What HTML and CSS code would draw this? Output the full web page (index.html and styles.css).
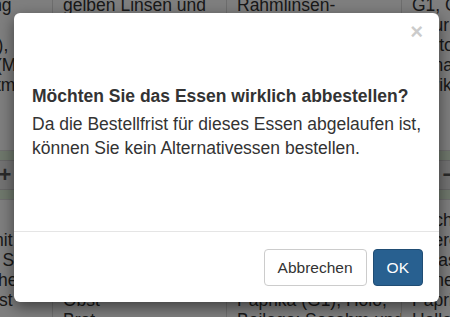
FILE: index.html
```html
<!DOCTYPE html>
<html lang="de">
<head>
<meta charset="utf-8">
<title>Abbestellen</title>
<link rel="stylesheet" href="styles.css">
</head>
<body>
<div class="page">
  <div class="table">
    <div class="cell">Salatergänzung<br>Salat<br>Kartoffeln (G1),<br>Kräuterbutter (Milch)<br>Gemüse-Salatmix</div>
    <div class="cell">gelben Linsen und<br>Kokosmilch<br>Reis (G1)<br>Salat<br>Dessert</div>
    <div class="cell">Rahmlinsen-<br>gemüse<br>Spätzle (G1)<br>Salat<br>Obst</div>
    <div class="cell">G1, G5<br>Sour Sahne<br>Kartoffel<br>Panade<br>Aprikosen</div>

    <div class="cell action"><span class="btn-sm">−</span><span class="field"></span><span class="btn-sm">+</span></div>
    <div class="cell action"><span class="btn-sm">−</span><span class="field"></span><span class="btn-sm">+</span></div>
    <div class="cell action"><span class="btn-sm">−</span><span class="field"></span><span class="btn-sm">+</span></div>
    <div class="cell action"><span class="btn-sm">−</span><span class="field"></span><span class="btn-sm">+</span></div>

    <div class="cell bottom"><div>Putenbraten mit<br>Kartoffeln und Salat<br>Vollkorn-Spaghetti<br>Gemüserohkost</div></div>
    <div class="cell bottom"><div>Gemüse<br>Kartoffeln<br>Salat<br>Dessert<br>Obst<br>Brot</div></div>
    <div class="cell bottom"><div>Gemüse<br>Kartoffeln<br>Salat<br>Dessert<br>Paprika (G1), Holo,<br>Beilage: Sesahm und</div></div>
    <div class="cell bottom"><div>Milchreis<br>Beeren<br>Chiasamen<br>Honey-Senf<br>Paprika<br>Hollandaise</div></div>
  </div>

  <div class="backdrop"></div>

  <div class="modal">
    <div class="modal-header">
      <span class="close">×</span>
    </div>
    <div class="modal-body">
      <p class="title">Möchten Sie das Essen wirklich abbestellen?</p>
      <p class="text">Da die Bestellfrist für dieses Essen abgelaufen ist, können Sie kein Alternativessen bestellen.</p>
    </div>
    <div class="modal-footer">
      <button class="btn btn-default">Abbrechen</button>
      <button class="btn btn-primary">OK</button>
    </div>
  </div>
</div>
</body>
</html>
```

FILE: styles.css
```css
html, body {
  margin: 0;
  padding: 0;
}

body {
  font-family: "Liberation Sans", Arial, sans-serif;
  color: #333;
  background: #fff;
  overflow: hidden;
}

.page {
  position: relative;
  width: 450px;
  height: 317px;
  overflow: hidden;
}

.table {
  display: grid;
  grid-template-columns: 174px 174px 175px 175px;
  grid-template-rows: 164px 49px 140px;
  margin-left: -121px;
  margin-top: -13px;
  font-size: 17.5px;
  line-height: 20px;
}

.cell {
  border-right: 1px solid #ddd;
  border-bottom: 1px solid #ddd;
  padding: 8px 10px;
  overflow: hidden;
  white-space: nowrap;
}

.bottom {
  display: flex;
  align-items: center;
  padding: 0 10px;
}

.action {
  background: #dff0d8;
  display: flex;
  align-items: center;
  padding: 0 30px;
}

.btn-sm {
  width: 34px;
  height: 30px;
  display: flex;
  align-items: center;
  justify-content: center;
  background: #e6e6e6;
  border: 1px solid #ccc;
  color: #555;
  font-size: 22px;
  font-weight: bold;
  box-sizing: border-box;
}

.field {
  flex: 1;
  height: 30px;
  background: #f4f4f4;
  border-top: 1px solid #ccc;
  border-bottom: 1px solid #ccc;
  box-sizing: border-box;
}

.backdrop {
  position: absolute;
  inset: 0;
  background: rgba(0, 0, 0, 0.5);
}

.modal {
  position: absolute;
  left: 14px;
  top: 13px;
  width: 425px;
  height: 289px;
  background: #fff;
  border-radius: 6px;
  box-shadow: 0 5px 15px rgba(0, 0, 0, 0.5);
  display: flex;
  flex-direction: column;
  font-size: 17.5px;
  color: #333;
}

.modal-header {
  display: flex;
  justify-content: flex-end;
  padding: 8px 16px 0;
  height: 48px;
  box-sizing: border-box;
}

.close {
  font-size: 22px;
  font-weight: bold;
  color: #000;
  opacity: 0.2;
  line-height: 22px;
}

.modal-body {
  flex: 1;
  padding: 23px 4px 0 18px;
}

.modal-body p {
  margin: 0;
}

.title {
  font-weight: bold;
  line-height: 24px;
  color: #333;
  margin-bottom: 4px !important;
}

.text {
  line-height: 24px;
}

.modal-footer {
  border-top: 1px solid #e5e5e5;
  display: flex;
  justify-content: flex-end;
  gap: 6px;
  padding: 17px 16px 16px;
}

.btn {
  font-family: "Liberation Sans", Arial, sans-serif;
  font-size: 15.5px;
  height: 37px;
  padding: 0 13px;
  border-radius: 4px;
  border: 1px solid #ccc;
  background: #fff;
  color: #333;
  line-height: 35px;
}

.btn-primary {
  background: #286090;
  border-color: #204d74;
  color: #fff;
}
```
